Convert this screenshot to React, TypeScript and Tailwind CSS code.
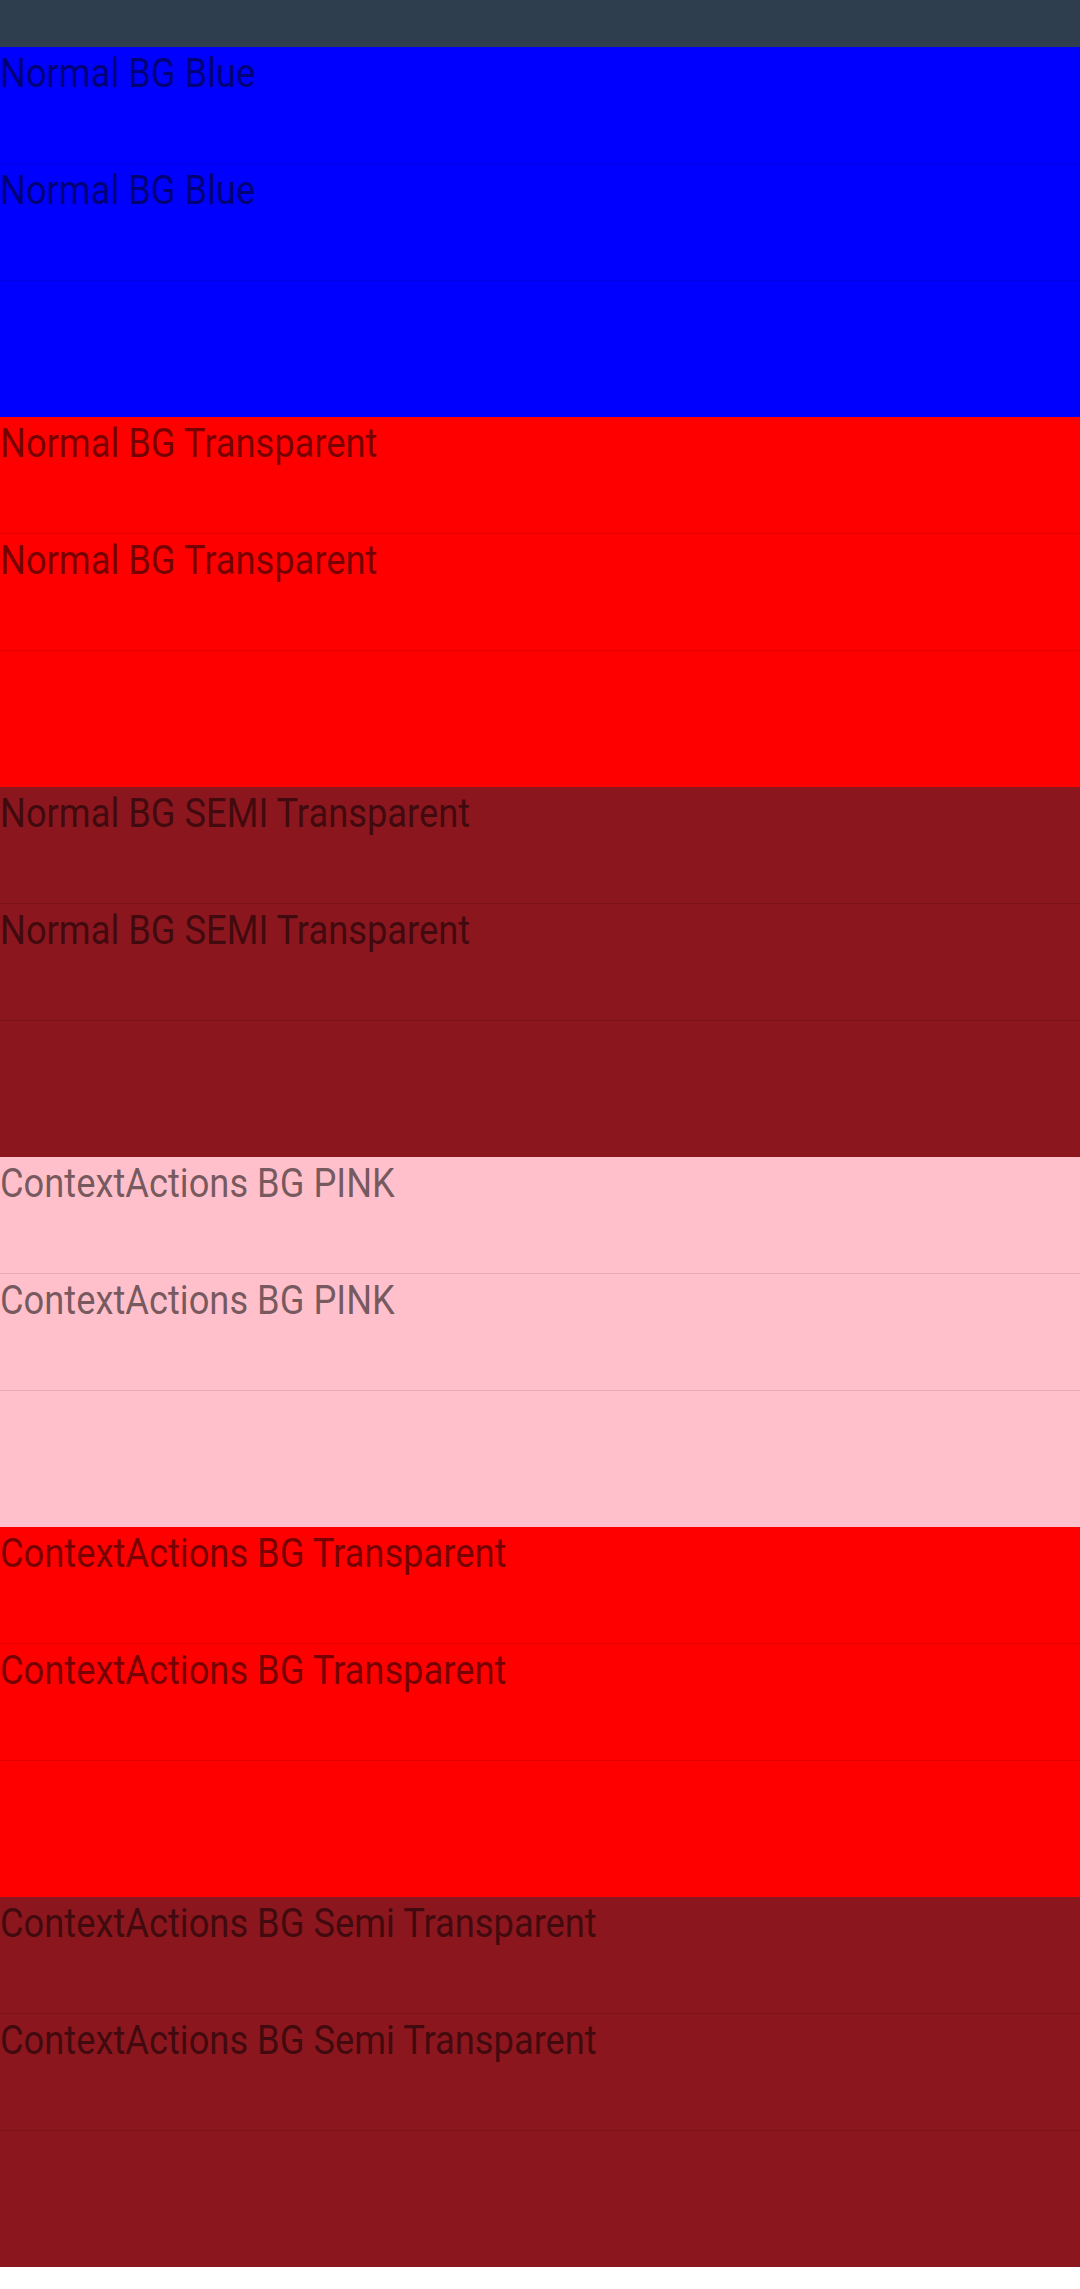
const sections = [
  { label: "Normal BG Blue", bg: "bg-[#0000ff]" },
  { label: "Normal BG Transparent", bg: "bg-[#ff0000]" },
  { label: "Normal BG SEMI Transparent", bg: "bg-[#8b161e]" },
  { label: "ContextActions BG PINK", bg: "bg-[#ffc0cb]" },
  { label: "ContextActions BG Transparent", bg: "bg-[#ff0000]" },
  { label: "ContextActions BG Semi Transparent", bg: "bg-[#8b161e]" },
];

function Row({ label, last }: { label?: string; last?: boolean }) {
  return (
    <div className={last ? "flex-1" : "h-[117px] border-b border-black/10"}>
      {label && (
        <span className="inline-block origin-left scale-x-[0.907] whitespace-nowrap pt-[3px] text-[40px] leading-[47px] text-black/55">
          {label}
        </span>
      )}
    </div>
  );
}

export default function App() {
  return (
    <div className="w-[1080px] min-h-[2289px] bg-white font-['Roboto',sans-serif]">
      <div className="h-[47px] bg-[#2f3e4e]" />
      {sections.map((s) => (
        <div key={s.label} className={"flex h-[370px] flex-col " + s.bg}>
          <Row label={s.label} />
          <Row label={s.label} />
          <Row last />
        </div>
      ))}
    </div>
  );
}
